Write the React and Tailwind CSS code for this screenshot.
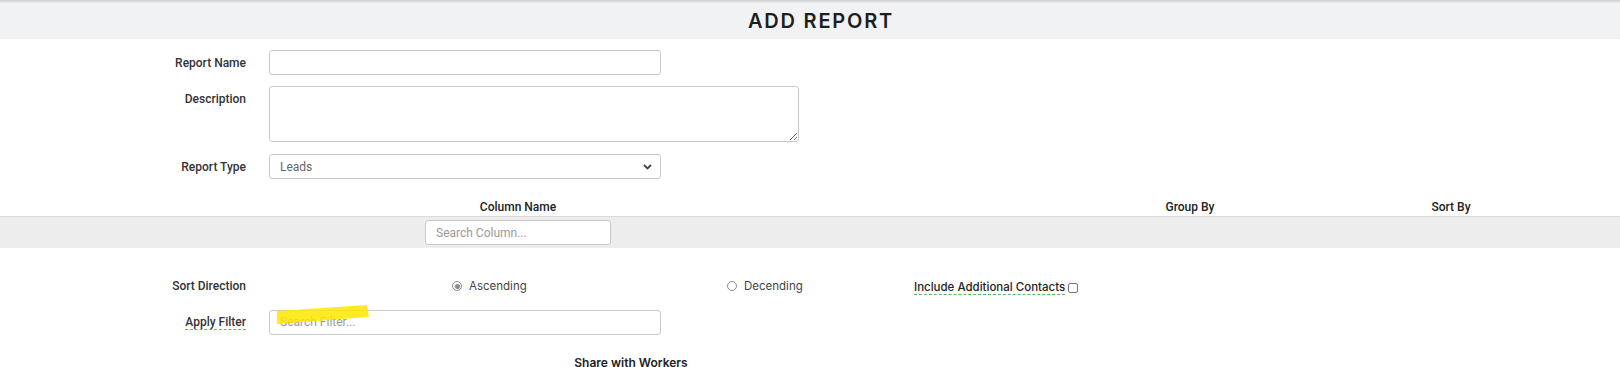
import React from 'react';

const labelCls = "w-[246px] shrink-0 text-right text-[12px] font-medium text-[#333] font-['Roboto',sans-serif]";
const inputCls = "h-[25px] rounded-[3px] border border-[#c8c8c8] bg-white px-[10px] text-[12px] text-[#555] font-['Roboto',sans-serif] placeholder:text-[#9a9a9a] outline-none";

function Radio({ checked, label }) {
  return (
    <label className="flex items-center gap-[7px] text-[11.5px] text-[#444] font-['Inter',sans-serif]">
      <span className="flex h-[10px] w-[10px] items-center justify-center rounded-full border border-[#8a8a8a] bg-white">
        {checked && <span className="h-[5px] w-[5px] rounded-full bg-[#8a8a8a]" />}
      </span>
      {label}
    </label>
  );
}

export default function App() {
  return (
    <div className="w-[1620px] h-[367px] overflow-hidden bg-white">
      {/* --- TITULO --- */}
      <div className="h-[3px] bg-gradient-to-b from-[#cdcdcd] to-[#eceef0]" />
      <div className="flex h-[36px] items-center justify-center bg-[#f1f2f4] pl-[22px]">
        <h1 className="text-[20px] font-semibold tracking-[1.8px] text-[#1e1e1e] font-['Inter',sans-serif]">ADD REPORT</h1>
      </div>

      {/* --- CAMPOS --- */}
      <div className="mt-[11px] flex flex-col gap-[12px]">
        <div className="flex items-center gap-[23px]">
          <span className={labelCls}>Report Name</span>
          <input className={`${inputCls} w-[392px]`} />
        </div>
        <div className="flex items-start gap-[23px] -mt-[1px]">
          <span className={`${labelCls} pt-[4px]`}>Description</span>
          <textarea className={`${inputCls} h-[56px] w-[530px] resize-y py-[4px]`} />
        </div>
        <div className="flex items-center gap-[23px]">
          <span className={labelCls}>Report Type</span>
          <div className={`${inputCls} flex w-[392px] items-center justify-between`}>
            <span className="text-[#666]">Leads</span>
            <svg width="9" height="6" viewBox="0 0 9 6" className="mr-[-2px]">
              <path d="M1 1l3.5 3.5L8 1" fill="none" stroke="#444" strokeWidth="1.8" />
            </svg>
          </div>
        </div>
      </div>

      {/* --- COLUNAS --- */}
      <div className="mt-[19px] grid grid-cols-[1036px_308px_214px_62px] text-[12px] font-medium text-[#222] font-['Roboto',sans-serif]">
        <div className="text-center">Column Name</div>
        <div className="text-center">Group By</div>
        <div className="text-center">Sort By</div>
        <div />
      </div>
      <div className="h-[32px] border-t border-[#dadada] bg-[#ededed]">
        <div className="grid grid-cols-[1036px_1fr] pt-[3px]">
          <div className="flex justify-center">
            <input placeholder="Search Column..." className={`${inputCls} w-[186px]`} />
          </div>
        </div>
      </div>

      {/* --- OPCOES --- */}
      <div className="mt-[28px] flex items-center">
        <span className={labelCls}>Sort Direction</span>
        <div className="ml-[206px] w-[275px]">
          <Radio checked label="Ascending" />
        </div>
        <div className="w-[187px]">
          <Radio label="Decending" />
        </div>
        <div className="mt-[3px] flex items-center gap-[3px]">
          <span className="text-[11.5px] font-medium text-[#222] font-['Inter',sans-serif] underline decoration-dashed decoration-[#5cb85c] underline-offset-[3px]">Include Additional Contacts</span>
          <span className="h-[10px] w-[10px] rounded-[2px] border border-[#777] bg-white" />
        </div>
      </div>

      <div className="mt-[12px] flex items-center gap-[23px]">
        <span className={`${labelCls} underline decoration-dashed decoration-[#5cb85c] underline-offset-[3px]`}>Apply Filter</span>
        <div className="relative">
          <input placeholder="Search Filter..." className={`${inputCls} w-[392px]`} />
          {/* marcador amarelo */}
          <svg className="pointer-events-none absolute left-[8px] top-[-3px]" width="94" height="22" viewBox="0 0 94 22">
            <polygon points="0,6 90,0 92,12 0,19" fill="#ffe600" opacity="0.85" />
          </svg>
        </div>
      </div>

      <div className="mt-[22px] w-[1262px] text-center text-[12px] leading-[12px] font-semibold text-[#222] font-['Inter',sans-serif]">
        Share with Workers
      </div>
    </div>
  );
}
